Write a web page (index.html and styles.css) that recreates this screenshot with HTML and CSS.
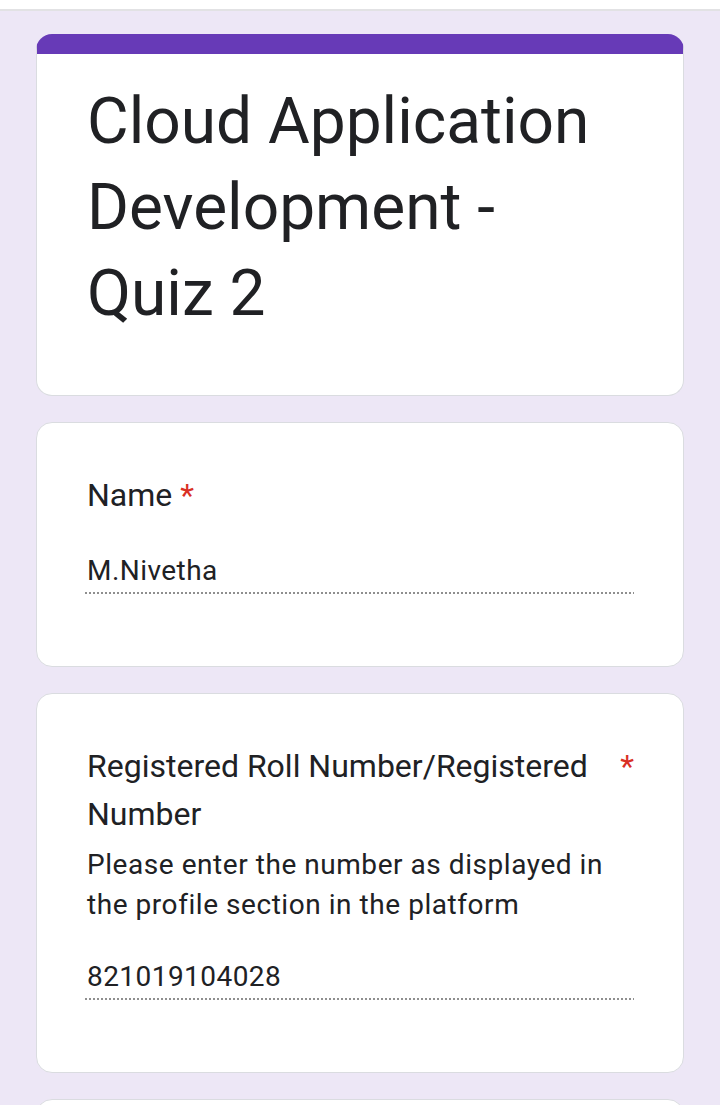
FILE: index.html
```html
<!DOCTYPE html>
<html lang="en">
<head>
<meta charset="utf-8">
<title>Cloud Application Development - Quiz 2</title>
<link rel="stylesheet" href="styles.css">
</head>
<body>
<div class="topbar"></div>
<main class="form">
  <section class="card title-card">
    <h1 class="form-title">Cloud Application Development - Quiz 2</h1>
  </section>

  <section class="card question">
    <div class="label"><span class="label-text">Name</span><span class="req">*</span></div>
    <div class="answer">M.Nivetha</div>
  </section>

  <section class="card question">
    <div class="label"><span class="label-text">Registered Roll Number/Registered Number</span><span class="req">*</span></div>
    <div class="desc">Please enter the number as displayed in the profile section in the platform</div>
    <div class="answer">821019104028</div>
  </section>

  <section class="card question empty"></section>
</main>
</body>
</html>
```

FILE: styles.css
```css
* { box-sizing: border-box; }

html, body {
  margin: 0;
  padding: 0;
}

body {
  background: #ede7f6;
  font-family: Roboto, "Noto Sans", "Liberation Sans", sans-serif;
  color: #202124;
  overflow: hidden;
  height: 1105px;
}

.topbar {
  height: 11px;
  background: #ffffff;
  border-bottom: 2px solid #e2e2e4;
}

.form {
  display: flex;
  flex-direction: column;
  gap: 26px;
  padding: 23px 36px 0;
}

.card {
  background: #ffffff;
  border: 1px solid #dadce0;
  border-radius: 16px;
  padding: 0 49px 0 50px;
}

.title-card {
  border-top: 20px solid #673ab7;
  padding-top: 25px;
  padding-bottom: 58px;
}

.form-title {
  margin: 0;
  font-size: 64px;
  font-weight: 400;
  line-height: 86px;
  letter-spacing: 0;
}

.question {
  padding-top: 48px;
  padding-bottom: 72px;
}

.label {
  display: flex;
  font-size: 32px;
  line-height: 48px;
}

.req {
  color: #d93025;
  padding-left: 8px;
  flex: none;
}

.desc {
  font-size: 28px;
  line-height: 40px;
  margin-top: 7px;
  letter-spacing: 0.55px;
}

.answer {
  margin-top: 32px;
  margin-left: -2px;
  padding-left: 2px;
  font-size: 28px;
  line-height: 40px;
  letter-spacing: 0.45px;
  padding-bottom: 1px;
  border-bottom: 2px solid transparent;
  border-image: repeating-linear-gradient(to right, #8f8f8f 0 2px, transparent 2px 4px) 0 0 2 0 / 0 0 2px 0 stretch;
}

.empty {
  height: 200px;
}
```
